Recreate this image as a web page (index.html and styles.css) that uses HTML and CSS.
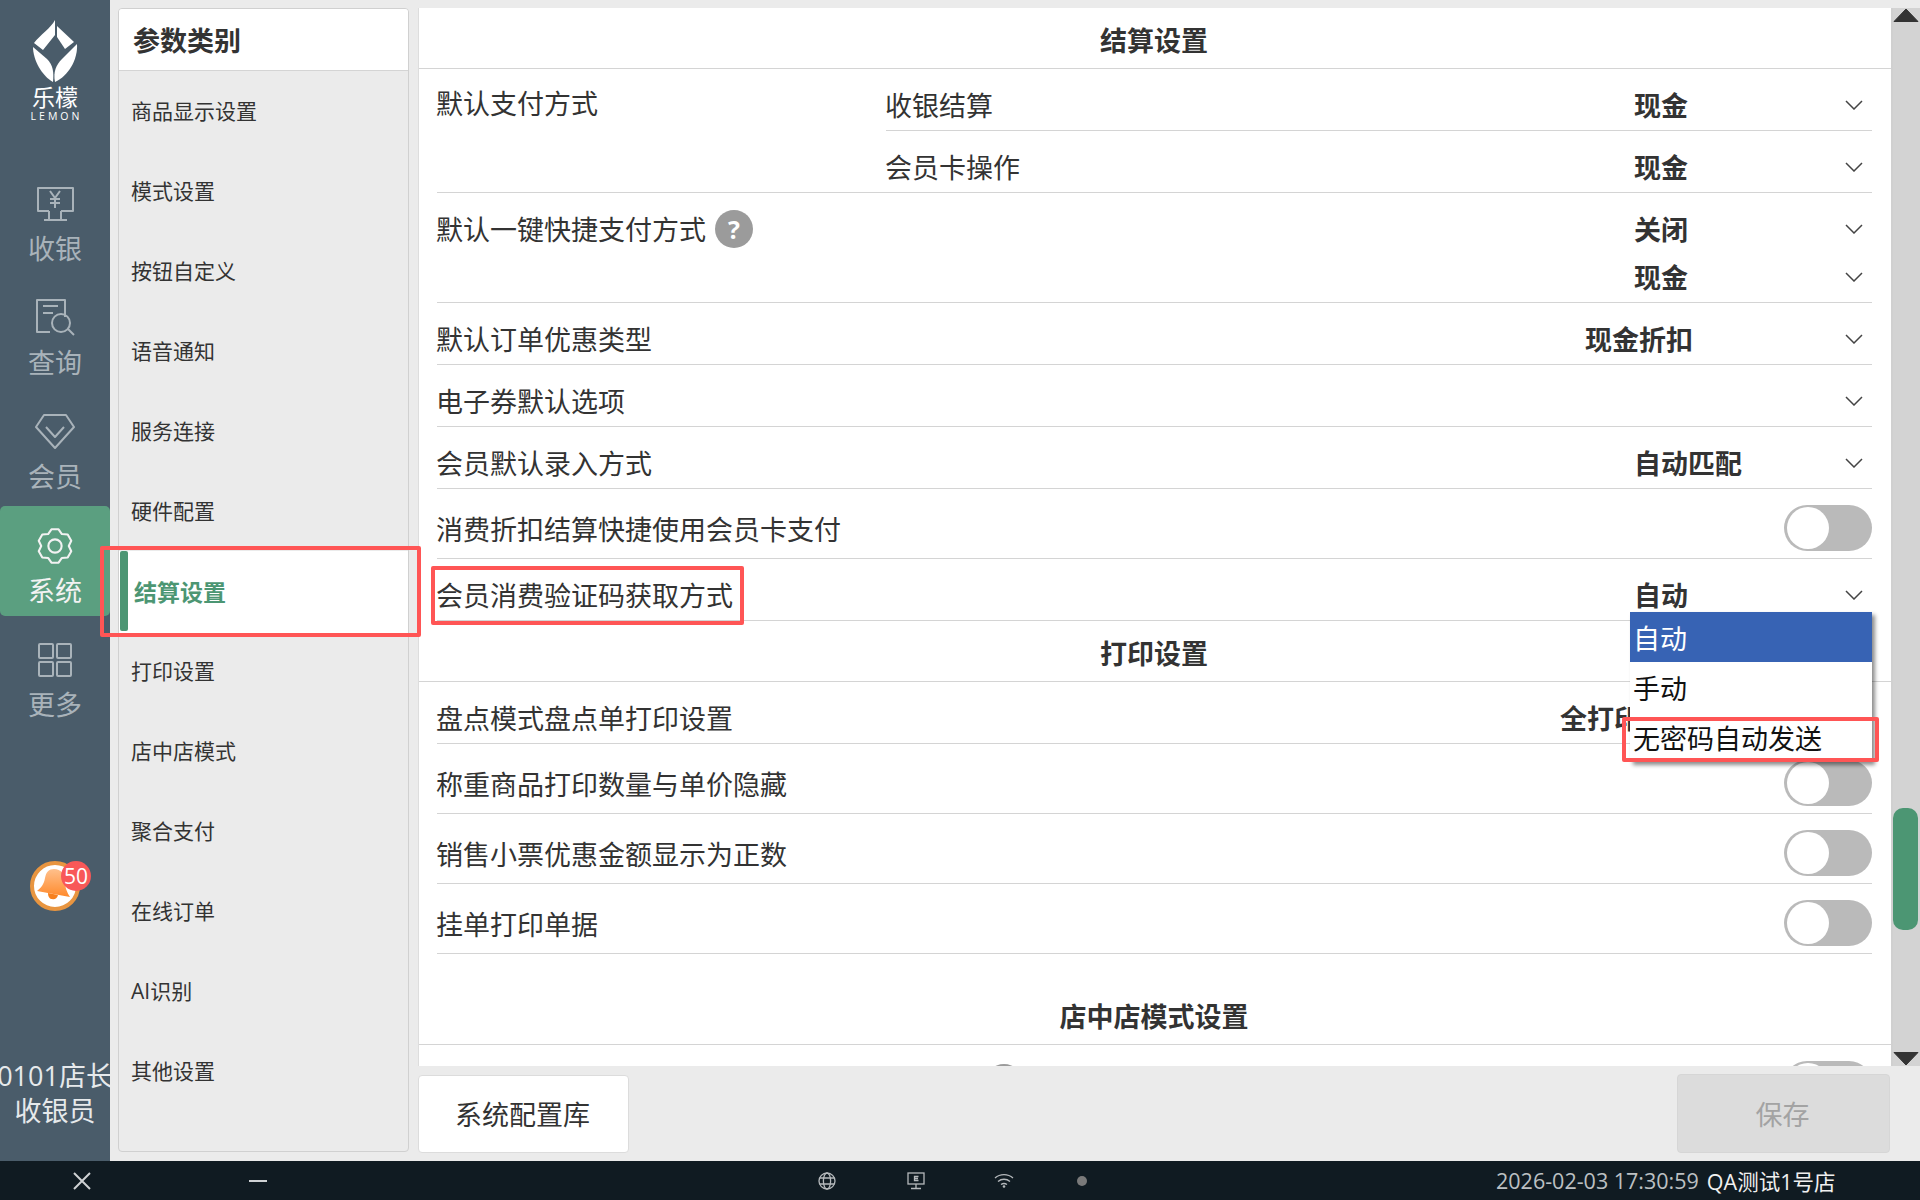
FILE: index.html
```html
<!DOCTYPE html>
<html lang="zh-CN">
<head>
<meta charset="utf-8">
<title>系统设置</title>
<link rel="stylesheet" href="styles.css">
</head>
<body>
<div class="app">
  <div class="top">
    <aside class="side">
      <div class="logo">
        <svg class="logo-mark" viewBox="32 20 46 62" width="46" height="62">
          <path d="M55 20C51 28 40 35 34 43L43 50L55 35Z"/>
          <path d="M57 26L74 42L65 49L57 37Z"/>
          <path d="M33 47C33 60 42 76 53 82C54 72 53 65 47 59Z"/>
          <path d="M77 44C78 60 68 76 55 82C53 72 56 65 62 59Z"/>
        </svg>
        <span class="logo-cn">乐檬</span>
        <span class="logo-en">LEMON</span>
      </div>
      <nav class="nav">
        <a class="nav-item">
          <svg class="nav-icon" viewBox="0 0 40 38" width="40" height="38">
            <path d="M14 27H3V4H38V27H26"/><path d="M14 27V35M26 27V35M9 36H32"/>
            <path d="M15 7L20 14L25 7M20 14V24M15 15H25M15 19H25"/>
          </svg>
          <span>收银</span>
        </a>
        <a class="nav-item">
          <svg class="nav-icon" viewBox="0 0 40 38" width="40" height="38">
            <path d="M30 19V2H2V34H15"/><path d="M8 8H23M8 15H18"/>
            <circle cx="26" cy="25" r="9"/><path d="M33 31L39 37"/>
          </svg>
          <span>查询</span>
        </a>
        <a class="nav-item">
          <svg class="nav-icon" viewBox="0 0 40 38" width="40" height="38">
            <path d="M9 3H31L39 15L20 36L1 15Z"/><path d="M11 15L20 25L29 15"/>
          </svg>
          <span>会员</span>
        </a>
        <a class="nav-item nav-item-active nav-item-low">
          <svg class="nav-icon" viewBox="0 0 40 40" width="40" height="38">
            <path d="M16.26 2.4H23.74L27.25 7.44L33.38 7.96L37.12 14.44L34.5 20L37.12 25.56L33.38 32.04L27.25 32.56L23.74 37.6H16.26L12.75 32.56L6.62 32.04L2.88 25.56L5.5 20L2.88 14.44L6.62 7.96L12.75 7.44Z"/>
            <circle cx="20" cy="20" r="7"/>
          </svg>
          <span>系统</span>
        </a>
        <a class="nav-item nav-item-low">
          <svg class="nav-icon" viewBox="0 0 40 38" width="40" height="38">
            <rect x="4" y="3" width="14" height="14" rx="1"/><rect x="22" y="3" width="14" height="14" rx="1"/>
            <rect x="4" y="21" width="14" height="14" rx="1"/><rect x="22" y="21" width="14" height="14" rx="1"/>
          </svg>
          <span>更多</span>
        </a>
      </nav>
      <div class="bell">
        <svg viewBox="0 0 50 50" width="50" height="50">
          <defs>
            <linearGradient id="bellFill" x1="0" y1="0" x2="0" y2="1">
              <stop offset="0" stop-color="#ffc08c"/><stop offset="1" stop-color="#ff8a2c"/>
            </linearGradient>
          </defs>
          <circle class="bell-ring" cx="25" cy="25" r="23"/>
          <path class="bell-body" d="M24 8C31 8 35 13 35 20C35 27 37 31 40 36L7 30C11 27 14 23 15 17C16 11 19 8 24 8Z"/>
          <path class="bell-clapper" d="M18 32L28 34C27 38 24 39 22 38C20 38 18 36 18 32Z"/>
        </svg>
        <span class="bell-badge">50</span>
      </div>
      <div class="user">
        <div class="user-name">0101店长</div>
        <div>收银员</div>
      </div>
    </aside>

    <section class="cats">
      <h2 class="cats-head">参数类别</h2>
      <div class="cat">商品显示设置</div>
      <div class="cat">模式设置</div>
      <div class="cat">按钮自定义</div>
      <div class="cat">语音通知</div>
      <div class="cat">服务连接</div>
      <div class="cat">硬件配置</div>
      <div class="cat cat-active"><i class="cat-bar"></i><span>结算设置</span></div>
      <div class="cat">打印设置</div>
      <div class="cat">店中店模式</div>
      <div class="cat">聚合支付</div>
      <div class="cat">在线订单</div>
      <div class="cat">AI识别</div>
      <div class="cat">其他设置</div>
    </section>

    <div class="main">
      <div class="content">
        <div class="settings">
          <h3 class="sec-title">结算设置</h3>
          <div class="rows">
            <div class="row group">
              <div class="label label-top">默认支付方式</div>
              <div class="subs">
                <div class="sub">
                  <span class="sub-label">收银结算</span>
                  <span class="val"><b>现金</b><svg class="chev" viewBox="0 0 18 10" width="18" height="10"><path d="M1 1L9 9L17 1"/></svg></span>
                </div>
                <div class="sub sub-last">
                  <span class="sub-label">会员卡操作</span>
                  <span class="val"><b>现金</b><svg class="chev" viewBox="0 0 18 10" width="18" height="10"><path d="M1 1L9 9L17 1"/></svg></span>
                </div>
              </div>
            </div>
            <div class="row group2">
              <div class="label label-q">默认一键快捷支付方式<span class="q">?</span></div>
              <div class="vals">
                <span class="val val-h"><b>关闭</b><svg class="chev" viewBox="0 0 18 10" width="18" height="10"><path d="M1 1L9 9L17 1"/></svg></span>
                <span class="val val-h"><b>现金</b><svg class="chev" viewBox="0 0 18 10" width="18" height="10"><path d="M1 1L9 9L17 1"/></svg></span>
              </div>
            </div>
            <div class="row">
              <div class="label">默认订单优惠类型</div>
              <span class="val val-wide"><b>现金折扣</b><svg class="chev" viewBox="0 0 18 10" width="18" height="10"><path d="M1 1L9 9L17 1"/></svg></span>
            </div>
            <div class="row">
              <div class="label">电子券默认选项</div>
              <span class="val"><b></b><svg class="chev" viewBox="0 0 18 10" width="18" height="10"><path d="M1 1L9 9L17 1"/></svg></span>
            </div>
            <div class="row">
              <div class="label">会员默认录入方式</div>
              <span class="val"><b>自动匹配</b><svg class="chev" viewBox="0 0 18 10" width="18" height="10"><path d="M1 1L9 9L17 1"/></svg></span>
            </div>
            <div class="row row-tall">
              <div class="label">消费折扣结算快捷使用会员卡支付</div>
              <span class="toggle"><i></i></span>
            </div>
            <div class="row">
              <div class="label">会员消费验证码获取方式</div>
              <span class="val"><b>自动</b><svg class="chev" viewBox="0 0 18 10" width="18" height="10"><path d="M1 1L9 9L17 1"/></svg></span>
            </div>
          </div>

          <h3 class="sec-title">打印设置</h3>
          <div class="rows">
            <div class="row">
              <div class="label">盘点模式盘点单打印设置</div>
              <span class="val val-xwide"><b>全打印</b></span>
            </div>
            <div class="row row-tall">
              <div class="label">称重商品打印数量与单价隐藏</div>
              <span class="toggle"><i></i></span>
            </div>
            <div class="row row-tall">
              <div class="label">销售小票优惠金额显示为正数</div>
              <span class="toggle"><i></i></span>
            </div>
            <div class="row row-tall">
              <div class="label">挂单打印单据</div>
              <span class="toggle"><i></i></span>
            </div>
          </div>

          <h3 class="sec-title sec-title-gap">店中店模式设置</h3>
          <div class="rows">
            <div class="row row-cut">
              <span class="q q-cut">?</span>
              <span class="toggle"><i></i></span>
            </div>
          </div>
        </div>
        <div class="scrollbar">
          <svg class="sb-arrow" viewBox="0 0 26 15" width="26" height="15"><path d="M13 1L25 13.500H1Z"/></svg>
          <div class="sb-thumb"></div>
          <svg class="sb-arrow sb-arrow-down" viewBox="0 0 26 15" width="26" height="15"><path d="M1 1.500H25L13 14Z"/></svg>
        </div>
      </div>
      <div class="foot">
        <button class="btn">系统配置库</button>
        <button class="btn btn-save">保存</button>
      </div>
    </div>
  </div>

  <footer class="bar">
    <svg class="bar-x" viewBox="0 0 18 18" width="18" height="18"><path d="M1 1L17 17M17 1L1 17"/></svg>
    <i class="bar-min"></i>
    <svg class="bar-globe" viewBox="0 0 18 18" width="18" height="18"><circle cx="9" cy="9" r="8"/><ellipse cx="9" cy="9" rx="3.600" ry="8"/><path d="M1.500 6H16.500M1.500 12H16.500"/></svg>
    <svg class="bar-mon" viewBox="0 0 18 18" width="18" height="18"><rect x="1" y="1" width="16" height="11"/><path d="M9 12V16M4 16.500H14M11.500 4.500H7.500V8.500H11.500M7.500 6.500H11"/></svg>
    <svg class="bar-wifi" viewBox="0 0 20 15" width="20" height="15"><path d="M1 5C6 0.500 14 0.500 19 5M4 8.500C7.500 5.500 12.500 5.500 16 8.500M7 11.500C8.800 10.300 11.200 10.300 13 11.500"/><circle class="bar-fill" cx="10" cy="13.500" r="1.300"/></svg>
    <i class="bar-dot"></i>
    <span class="bar-date">2026-02-03 17:30:59</span>
    <span class="bar-shop">QA测试1号店</span>
  </footer>

  <div class="dropdown">
    <div class="opt opt-on">自动</div>
    <div class="opt opt-b">手动</div>
    <div class="opt opt-b">无密码自动发送</div>
  </div>
  <div class="mark mark-cat"></div>
  <div class="mark mark-label"></div>
  <div class="mark mark-opt"></div>
</div>
</body>
</html>
```
FILE: styles.css
```css
* { box-sizing: border-box; }
html, body { margin: 0; padding: 0; }
body {
  width: 1920px;
  height: 1200px;
  overflow: hidden;
  font-family: "Open Sans", "Noto Sans CJK SC", sans-serif;
  color: #333;
  background: #ebebeb;
}
.app { position: relative; display: flex; flex-direction: column; width: 1920px; height: 1200px; }
.top { display: flex; height: 1161px; }

/* sidebar */
.side { width: 110px; flex: none; background: #4a5c6a; display: flex; flex-direction: column; overflow: hidden; }
.logo { height: 164px; padding-top: 20px; display: flex; flex-direction: column; align-items: center; color: #fff; }
.logo-mark { fill: #fff; display: block; }
.logo-cn { font-size: 23px; line-height: 23px; margin-top: 4px; }
.logo-en { font-size: 10.500px; line-height: 11px; letter-spacing: 3px; margin: 2px -3px 0 0; }
.nav { display: flex; flex-direction: column; gap: 4px; }
.nav-item { height: 110px; padding-top: 20px; display: flex; flex-direction: column; align-items: center; color: #a9b3ba; font-size: 27px; line-height: 36px; border-radius: 5px; }
.nav-item span { margin-top: 9px; }
.nav-item-low { padding-top: 21px; }
.nav-item-low span { margin-top: 8px; }
.nav-icon { display: block; fill: none; stroke: #a9b3ba; stroke-width: 2; stroke-linejoin: round; }
.nav-item-active { background: #5b9f80; color: #f2f2f2; }
.nav-item-active .nav-icon { stroke: #f2f2f2; stroke-width: 2.200; }
.bell { position: relative; width: 50px; height: 50px; margin: 131px 0 0 30px; }
.bell svg { display: block; }
.bell-ring { fill: #fff; stroke: #e89540; stroke-width: 4; }
.bell-body { fill: url(#bellFill); }
.bell-clapper { fill: #f7801e; }
.bell-badge { position: absolute; left: 31px; top: 0; width: 30px; height: 30px; border-radius: 50%; background: #f85858; color: #fff; font-size: 21px; line-height: 30px; text-align: center; }
.user { margin-top: auto; padding-bottom: 33px; color: #e6e9eb; font-size: 27px; line-height: 35px; text-align: center; }
.user-name { display: flex; justify-content: center; white-space: nowrap; }

/* category panel */
.cats { width: 291px; flex: none; margin: 8px 9px 9px 8px; border: 1px solid #d0d0d0; border-radius: 4px; background: #ebebeb; overflow: hidden; }
.cats-head { margin: 0; height: 62px; padding-left: 14px; background: #fff; border-bottom: 1px solid #d4d4d4; font-size: 27px; font-weight: 700; line-height: 64px; color: #333; }
.cat { height: 80px; padding-left: 12px; font-size: 21px; line-height: 80px; color: #333; }
.cat-active { display: flex; align-items: center; padding: 2px 0 0; background: #fff; box-shadow: 0 2px 0 #fff; color: #4c9673; font-size: 23px; font-weight: 700; }
.cat-bar { width: 8px; height: 80px; margin: -2px 6px 0 1px; background: #4c9673; border-radius: 2px; }

/* settings */
.main { flex: 1; min-width: 0; display: flex; flex-direction: column; }
.content { height: 1058px; margin-top: 8px; display: flex; overflow: hidden; }
.settings { width: 1475px; flex: none; background: #fff; border-left: 1px solid #ddd; border-right: 2px solid #d0d0d0; overflow: hidden; }
.sec-title { margin: 0; height: 61px; padding: 3px 2px 0 0; border-bottom: 1px solid #d4d4d4; font-size: 27px; font-weight: 700; line-height: 59px; text-align: center; color: #333; }
.sec-title-gap { margin-top: 30px; }
.rows { padding: 0 19px 0 18px; }
.row { display: flex; align-items: center; height: 62px; padding-top: 12px; border-bottom: 1px solid #d4d4d4; font-size: 27px; line-height: 40px; color: #333; }
.row-tall { height: 70px; }
.label { flex: 1; min-width: 0; margin-left: -1px; white-space: nowrap; }
.group { height: 124px; padding-top: 0; align-items: flex-start; }
.label-top { flex: none; width: 450px; padding-top: 15px; }
.subs { flex: 1; }
.sub { display: flex; align-items: center; height: 62px; padding-top: 12px; border-bottom: 1px solid #d4d4d4; }
.sub-last { height: 61px; border-bottom: 0; }
.sub-label { flex: 1; margin-left: -1px; }
.group2 { height: 110px; padding-top: 0; align-items: flex-start; }
.label-q { display: flex; align-items: center; padding-top: 17px; }
.q { display: block; flex: none; width: 38px; height: 38px; margin: -2px 0 0 9px; border-radius: 50%; background: #9b9b9b; color: #fff; font-size: 25px; font-weight: 700; line-height: 38px; text-align: center; }
.vals { display: flex; flex-direction: column; padding-top: 13px; }
.val { display: flex; align-items: center; justify-content: space-between; width: 237px; padding-right: 9px; }
.val b { font-weight: 700; margin-left: -1px; }
.val-h { height: 48px; }
.val-wide { width: 286px; }
.val-xwide { width: 311px; }
.chev { fill: none; stroke: #444; stroke-width: 1.500; margin-top: -2px; }
.val-h .chev { margin-top: -3px; }
.toggle { display: block; flex: none; width: 88px; height: 46px; margin-top: -4px; padding: 2px 0 0 3px; border-radius: 23px; background: #bababa; }
.toggle i { display: block; width: 42px; height: 42px; border-radius: 50%; background: #fff; }
.row-cut { height: 70px; align-items: flex-start; justify-content: space-between; padding-top: 16px; }
.row-cut .toggle { margin-top: 0; }
.q-cut { margin: 3px 0 0 548px; }

/* scrollbar */
.scrollbar { flex: 1; display: flex; flex-direction: column; background: #d3d3d3; padding-left: 0; }
.sb-arrow { display: block; flex: none; fill: #333; stroke: #333; stroke-linejoin: round; }
.sb-thumb { flex: none; width: 25px; height: 122px; margin-top: 785px; border-radius: 10px; background: #4c9673; }
.sb-arrow-down { margin-top: auto; }

/* footer */
.foot { height: 95px; display: flex; align-items: center; justify-content: space-between; padding-right: 30px; }
.btn { height: 78px; font-family: inherit; font-size: 27px; border-radius: 4px; border: 1px solid #dcdcdc; background: #fff; color: #333; padding: 0 2px 0 0; width: 211px; }
.btn-save { width: 213px; height: 79px; background: #dcdcdc; border-color: #d6d6d6; color: #a3a3a3; }

/* status bar */
.bar { height: 39px; display: flex; align-items: center; background: #101b22; color: #bcc0c3; font-size: 21.500px; white-space: nowrap; }
.bar svg { display: block; flex: none; fill: none; stroke: #b5b9bc; stroke-width: 1.300; }
.bar-x { margin-left: 73px; stroke: #cfd2d4 !important; stroke-width: 2 !important; }
.bar-min { width: 18px; height: 2px; margin-left: 158px; background: #cfd2d4; }
.bar-globe { margin-left: 551px; }
.bar-mon { margin-left: 71px; }
.bar-wifi { margin-left: 69px; }
.bar-fill { fill: #b5b9bc; stroke: none; }
.bar-dot { width: 10px; height: 10px; margin-left: 63px; border-radius: 50%; background: #7a7a7a; }
.bar-date { margin-left: 409px; }
.bar-shop { margin-left: 8px; color: #f0f0f0; }

/* open dropdown and annotation boxes */
.dropdown { position: absolute; left: 1630px; top: 612px; width: 242px; height: 150px; background: #fff; box-shadow: 3px 3px 4px rgba(0,0,0,.45); font-size: 27px; color: #111; }
.opt { height: 50px; padding: 4px 0 0 3px; line-height: 46px; white-space: nowrap; }
.opt-on { background: #3763b4; color: #fff; padding-left: 3px; }
.mark { position: absolute; border: 4px solid #ff5555; border-radius: 2px; }
.mark-cat { left: 100px; top: 546px; width: 321px; height: 91px; }
.mark-label { left: 431px; top: 566px; width: 313px; height: 59px; }
.mark-opt { left: 1622px; top: 717px; width: 257px; height: 45px; }
```
